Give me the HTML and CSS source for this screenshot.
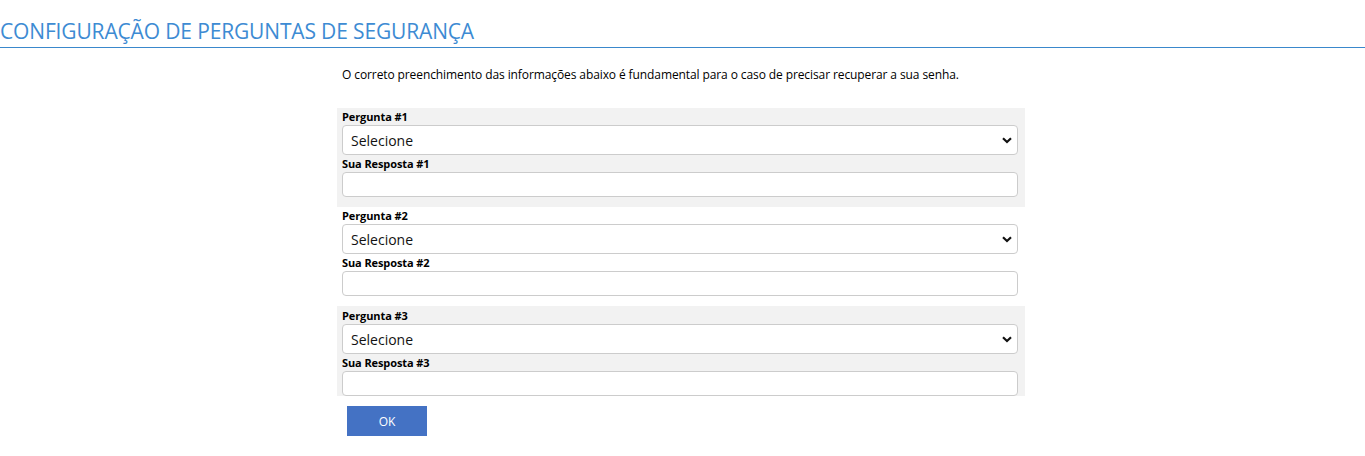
FILE: index.html
```html
<!DOCTYPE html>
<html lang="pt">
<head>
<meta charset="utf-8">
<title>Configuração de Perguntas de Segurança</title>
<link rel="stylesheet" href="styles.css">
</head>
<body>
<h1 class="page-title">CONFIGURAÇÃO DE PERGUNTAS DE SEGURANÇA</h1>
<div class="content">
  <p class="intro">O correto preenchimento das informações abaixo é fundamental para o caso de precisar recuperar a sua senha.</p>
  <div class="block block-gray block-first">
    <label class="lbl">Pergunta #1</label>
    <div class="select-wrap">
      <select class="sel"><option>Selecione</option></select>
      <svg class="chev" width="10" height="7" viewBox="0 0 10 7"><path d="M1 1.2 L5 5 L9 1.2" fill="none" stroke="#111" stroke-width="2.2"/></svg>
    </div>
    <label class="lbl">Sua Resposta #1</label>
    <input class="txt" type="text">
  </div>
  <div class="block block-white">
    <label class="lbl">Pergunta #2</label>
    <div class="select-wrap">
      <select class="sel"><option>Selecione</option></select>
      <svg class="chev" width="10" height="7" viewBox="0 0 10 7"><path d="M1 1.2 L5 5 L9 1.2" fill="none" stroke="#111" stroke-width="2.2"/></svg>
    </div>
    <label class="lbl">Sua Resposta #2</label>
    <input class="txt" type="text">
  </div>
  <div class="block block-gray block-last">
    <label class="lbl">Pergunta #3</label>
    <div class="select-wrap">
      <select class="sel"><option>Selecione</option></select>
      <svg class="chev" width="10" height="7" viewBox="0 0 10 7"><path d="M1 1.2 L5 5 L9 1.2" fill="none" stroke="#111" stroke-width="2.2"/></svg>
    </div>
    <label class="lbl">Sua Resposta #3</label>
    <input class="txt" type="text">
  </div>
  <button class="btn-ok" type="button">OK</button>
</div>
</body>
</html>
```

FILE: styles.css
```css
body {
  margin: 0;
  font-family: "Open Sans", "Noto Sans", sans-serif;
  color: #000;
  background: #fff;
}
.page-title {
  margin: 19px 0 0 0;
  padding: 0 0 3px 0;
  font-size: 21px;
  line-height: 25px;
  font-weight: 400;
  color: #3d8bd3;
  border-bottom: 1px solid #3a88cc;
  letter-spacing: -0.15px;
}
.content {
  margin-left: 337px;
  width: 688px;
}
.intro {
  margin: 19px 0 0 5px;
  font-size: 12px;
  line-height: 16px;
  letter-spacing: -0.1px;
}
.block {
  display: flex;
  flex-direction: column;
  padding: 0 7px 0 5px;
}
.block-gray {
  background: #f2f2f2;
}
.block-first {
  margin-top: 25px;
  padding-top: 1px;
  padding-bottom: 10px;
}
.block-white {
  padding-top: 1px;
  padding-bottom: 10px;
}
.block-last {
  padding-top: 2px;
}
.lbl {
  display: block;
  font-size: 11px;
  font-weight: 700;
  line-height: 16px;
  height: 16px;
  letter-spacing: -0.1px;
}
.select-wrap {
  position: relative;
  height: 30px;
  margin-bottom: 1px;
}
.sel {
  appearance: none;
  -webkit-appearance: none;
  box-sizing: border-box;
  width: 100%;
  height: 30px;
  border: 1px solid #cccccc;
  border-radius: 4px;
  background: #fff;
  padding: 0 8px;
  font-family: "Open Sans", "Noto Sans", sans-serif;
  font-size: 14px;
  color: #111;
}
.chev {
  position: absolute;
  right: 6px;
  top: 12px;
  pointer-events: none;
}
.txt {
  box-sizing: border-box;
  width: 100%;
  height: 25px;
  margin: 0;
  border: 1px solid #cccccc;
  border-radius: 4px;
  background: #fff;
  padding: 0 8px;
  font-size: 14px;
}
.btn-ok {
  display: block;
  margin: 10px 0 0 10px;
  width: 80px;
  height: 30px;
  border: none;
  background: #4472c4;
  color: #fff;
  font-family: "Open Sans", "Noto Sans", sans-serif;
  font-size: 12px;
  padding: 0;
}
```
